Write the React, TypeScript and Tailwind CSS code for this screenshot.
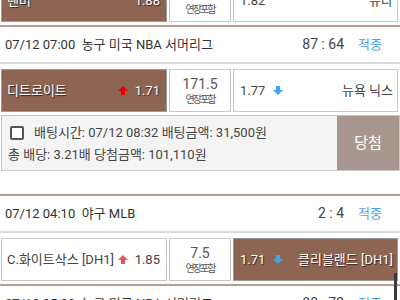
import React from 'react';

type Side = {
  team: string;
  odds: string;
  arrow?: 'up' | 'down';
  picked?: boolean;
};

type Game = {
  time?: string;
  league?: string;
  score?: string;
  result?: string;
  home: Side;
  line: string;
  away: Side;
  bet?: { time: string; amount: string; rate: string; win: string; status: string };
};

function UpArrow({ color }: { color: string }) {
  return (
    <svg width="10" height="9" viewBox="0 0 10 9" className="shrink-0">
      <path d="M5 0 L10 5 H7 V9 H3 V5 H0 Z" fill={color} />
    </svg>
  );
}

function DownArrow({ color }: { color: string }) {
  return (
    <svg width="10" height="9" viewBox="0 0 10 9" className="shrink-0">
      <path d="M3 0 H7 V4 H10 L5 9 L0 4 H3 Z" fill={color} />
    </svg>
  );
}

function Arrow({ dir, picked }: { dir?: 'up' | 'down'; picked?: boolean }) {
  if (dir === 'up') return <UpArrow color={picked ? '#e00000' : '#e65757'} />;
  if (dir === 'down') return <DownArrow color="#3ea4ec" />;
  return null;
}

function cellClass(picked?: boolean) {
  return picked
    ? 'bg-[#8e6553] border border-[#9a9a9a] text-white [text-shadow:1px_1px_1px_rgba(0,0,0,0.65)]'
    : 'bg-white border border-[#c8c8c8] text-[#444]';
}

function OddsRow({ game }: { game: Game }) {
  const { home, away } = game;
  return (
    <div className="flex gap-[2px] pl-[1px] pr-[2px] pt-[5px] pb-[3px]">
      <div className={`w-[166px] h-[43px] flex items-center justify-between pl-[5px] pr-[6px] text-[13px] ${cellClass(home.picked)}`}>
        <span>{home.team}</span>
        <span className="flex items-center gap-[7px]">
          <Arrow dir={home.arrow} picked={home.picked} />
          <span>{home.odds}</span>
        </span>
      </div>
      <div className="w-[62px] h-[43px] flex flex-col items-center justify-center bg-white border border-[#c8c8c8] text-[#555]">
        <span className="text-[14px] leading-[16px]">{game.line}</span>
        <span className="text-[10px] leading-[12px] mt-[2px] tracking-[-2px]">연장포함</span>
      </div>
      <div className={`flex-1 h-[43px] flex items-center justify-between pl-[6px] pr-[4px] text-[13px] ${cellClass(away.picked)}`}>
        <span className="flex items-center gap-[8px]">
          <span>{away.odds}</span>
          <Arrow dir={away.arrow} picked={away.picked} />
        </span>
        <span>{away.team}</span>
      </div>
    </div>
  );
}

function GameHeader({ game }: { game: Game }) {
  return (
    <div className="h-[37px] flex items-center pl-[5px] pr-[18px] border-b-2 border-[#d9d9d9] text-[13px] text-[#333]">
      <span className="flex-1 whitespace-pre">
        {game.time}  {game.league}
      </span>
      <span className="text-[14px] text-[#444]">{game.score}</span>
      <span className="ml-[14px] text-[#4a9de3]">{game.result}</span>
    </div>
  );
}

function BetBox({ bet }: { bet: NonNullable<Game['bet']> }) {
  return (
    <div className="ml-[1px] mb-[23px] h-[56px] flex bg-[#f4f4f4] border border-[#c8c8c8] text-[13px] text-[#444]">
      <div className="flex-1 flex flex-col pl-[6px] pt-[6px]">
        <div className="flex items-center h-[22px]">
          <span className="w-[14px] h-[14px] ml-[2px] mr-[10px] border-2 border-[#555] rounded-[2px] bg-white" />
          <span>
            배팅시간: {bet.time} 배팅금액: {bet.amount}
          </span>
        </div>
        <div className="h-[22px] flex items-center">
          총 배당: {bet.rate} 당첨금액: {bet.win}
        </div>
      </div>
      <div className="w-[62px] flex items-center justify-center bg-[#a8978e] text-white text-[15px]">
        {bet.status}
      </div>
    </div>
  );
}

const games: Game[] = [
  {
    time: '07/12 07:00',
    league: '농구 미국 NBA 서머리그',
    score: '87 : 64',
    result: '적중',
    home: { team: '디트로이트', odds: '1.71', arrow: 'up', picked: true },
    line: '171.5',
    away: { team: '뉴욕 닉스', odds: '1.77', arrow: 'down' },
    bet: { time: '07/12 08:32', amount: '31,500원', rate: '3.21배', win: '101,110원', status: '당첨' },
  },
  {
    time: '07/12 04:10',
    league: '야구 MLB',
    score: '2 : 4',
    result: '적중',
    home: { team: 'C.화이트삭스 [DH1]', odds: '1.85', arrow: 'up' },
    line: '7.5',
    away: { team: '클리블랜드 [DH1]', odds: '1.71', arrow: 'down', picked: true },
  },
  {
    time: '07/12 05:00',
    league: '농구 미국 NBA 서머리그',
    score: '80 : 72',
    result: '적중',
    home: { team: '보스턴', odds: '1.80' },
    line: '165.5',
    away: { team: '마이애미', odds: '1.80' },
  },
];

const previous: Game = {
  home: { team: '덴버', odds: '1.88', picked: true },
  line: '168.5',
  away: { team: '유타', odds: '1.82' },
};

export default function App() {
  return (
    <div className="relative w-[400px] h-[300px] overflow-hidden bg-white font-[Roboto,'Noto_Sans_CJK_KR',sans-serif]">
      <div className="-mt-[26px] border-b-2 border-[#bb9d8f]">
        <OddsRow game={previous} />
      </div>
      {games.map((g) => (
        <div key={g.time} className="border-b-2 border-[#bb9d8f]">
          <GameHeader game={g} />
          <OddsRow game={g} />
          {g.bet && <BetBox bet={g.bet} />}
        </div>
      ))}
      <div className="absolute left-[394px] top-[273px] w-[3px] h-[40px] bg-[#3a3a3a]" />
    </div>
  );
}
